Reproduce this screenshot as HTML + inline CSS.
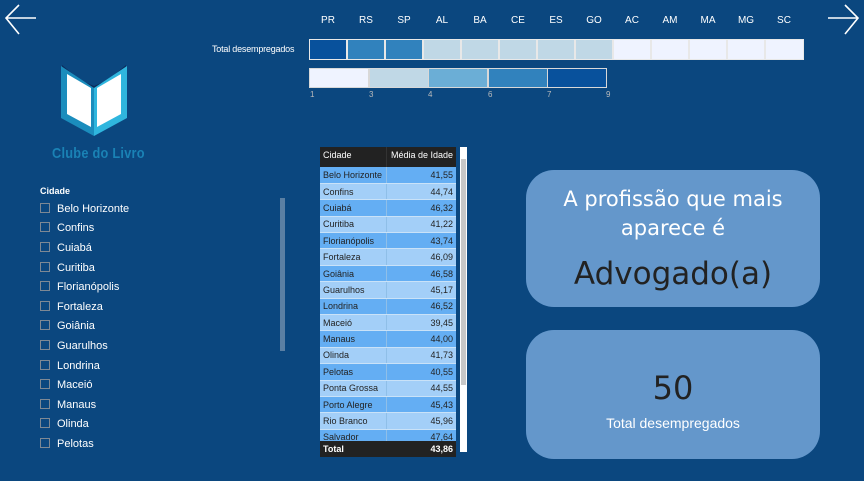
<!DOCTYPE html>
<html><head><meta charset="utf-8"><style>
*{margin:0;padding:0;box-sizing:border-box}
body{width:864px;height:481px;background:#0b477f;font-family:"Liberation Sans",sans-serif;position:relative;overflow:hidden;color:#fff}
.abs{position:absolute}
.lbl{position:absolute;top:15px;font-size:10px;color:#fff;width:38px;text-align:center}
.cell{position:absolute;top:39px;height:21px;width:38px;border:1px solid #e8e8e8}
.lg{position:absolute;top:68px;height:20px;border:1px solid #d8d8d8}
.tick{position:absolute;top:90px;font-size:8px;color:#bbb}
.sl{position:absolute;left:40px;font-size:11px;color:#fff;height:14px;line-height:14px}
.sl i{display:inline-block;width:10px;height:10px;border:1px solid #7d8894;vertical-align:-1px;margin-right:7px}
table{border-collapse:collapse;font-size:9px;color:#222;width:136px}
td{height:16.4px;padding:0 3px;white-space:nowrap;overflow:hidden;border-bottom:1px solid #c9e2f8}
td:first-child{border-right:1px solid #8fbfe8;width:66px;max-width:66px}
td:last-child{text-align:right}
tr:nth-child(odd) td{background:#64aef3}
tr:nth-child(even) td{background:#a3cff8}
.card{position:absolute;left:526px;width:294px;background:#6497cb;border-radius:28px;text-align:center;font-family:"DejaVu Sans","Liberation Sans",sans-serif}
</style></head><body>
<svg class="abs" style="left:2px;top:2px" width="36" height="34"><path d="M34 16H5M17 3L4 16L17 32" stroke="#fff" stroke-width="1.6" fill="none"/></svg>
<svg class="abs" style="left:826px;top:2px" width="36" height="34"><path d="M2 16H31M19 3L32 16L19 32" stroke="#fff" stroke-width="1.6" fill="none"/></svg>

<svg class="abs" style="left:58px;top:58px" width="72" height="80">
<polygon points="4,7 22,22 36,28 50,22 68,7 68,12 36,30 4,12" fill="#0d2a5a"/>
<polygon points="3,8 36,30 36,78 3,60" fill="#1b8dbd"/>
<polygon points="69,8 36,30 36,78 69,60" fill="#2fb6de"/>
<polygon points="9,16 33,30 33,69 9,56" fill="#fff"/>
<polygon points="63,16 39,30 39,69 63,56" fill="#fff"/>
</svg>
<div class="abs" style="left:52px;top:145px;font-size:15px;font-weight:bold;color:#1a82b5;transform:scaleX(0.85);transform-origin:left;letter-spacing:0.3px">Clube do Livro</div>

<div class="abs" style="left:212px;top:44px;font-size:9px;color:#fff;letter-spacing:-0.2px">Total desempregados</div>
<div class="lbl" style="left:309px">PR</div><div class="lbl" style="left:347px">RS</div><div class="lbl" style="left:385px">SP</div><div class="lbl" style="left:423px">AL</div><div class="lbl" style="left:461px">BA</div><div class="lbl" style="left:499px">CE</div><div class="lbl" style="left:537px">ES</div><div class="lbl" style="left:575px">GO</div><div class="lbl" style="left:613px">AC</div><div class="lbl" style="left:651px">AM</div><div class="lbl" style="left:689px">MA</div><div class="lbl" style="left:727px">MG</div><div class="lbl" style="left:765px">SC</div>
<div class="cell" style="left:309px;background:#08519c"></div><div class="cell" style="left:347px;background:#3182bd"></div><div class="cell" style="left:385px;background:#3182bd"></div><div class="cell" style="left:423px;background:#c0d8e6"></div><div class="cell" style="left:461px;background:#c0d8e6"></div><div class="cell" style="left:499px;background:#c0d8e6"></div><div class="cell" style="left:537px;background:#c0d8e6"></div><div class="cell" style="left:575px;background:#c0d8e6"></div><div class="cell" style="left:613px;background:#eff3ff"></div><div class="cell" style="left:651px;background:#eff3ff"></div><div class="cell" style="left:689px;background:#eff3ff"></div><div class="cell" style="left:727px;background:#eff3ff"></div><div class="cell" style="left:765px;width:39px;background:#eff3ff"></div>
<div class="lg" style="left:309px;width:60px;background:#eff3ff"></div><div class="lg" style="left:369px;width:60px;background:#c0d8e6"></div><div class="lg" style="left:428px;width:60px;background:#6baed6"></div><div class="lg" style="left:488px;width:60px;background:#3182bd"></div><div class="lg" style="left:547px;width:60px;background:#08519c"></div>
<div class="tick" style="left:310px">1</div><div class="tick" style="left:369px">3</div><div class="tick" style="left:428px">4</div><div class="tick" style="left:488px">6</div><div class="tick" style="left:547px">7</div><div class="tick" style="left:606px">9</div>

<div class="abs" style="left:40px;top:186px;font-size:9px;font-weight:bold">Cidade</div>
<div class="abs" style="left:280px;top:198px;width:5px;height:153px;background:#5a7fa3"></div>
<div class="sl" style="top:202px"><i></i>Belo Horizonte</div>
<div class="sl" style="top:221px"><i></i>Confins</div>
<div class="sl" style="top:241px"><i></i>Cuiabá</div>
<div class="sl" style="top:261px"><i></i>Curitiba</div>
<div class="sl" style="top:280px"><i></i>Florianópolis</div>
<div class="sl" style="top:300px"><i></i>Fortaleza</div>
<div class="sl" style="top:319px"><i></i>Goiânia</div>
<div class="sl" style="top:339px"><i></i>Guarulhos</div>
<div class="sl" style="top:359px"><i></i>Londrina</div>
<div class="sl" style="top:378px"><i></i>Maceió</div>
<div class="sl" style="top:398px"><i></i>Manaus</div>
<div class="sl" style="top:417px"><i></i>Olinda</div>
<div class="sl" style="top:437px"><i></i>Pelotas</div>

<div class="abs" style="left:320px;top:147px;width:136px;height:20px;background:#222;font-size:9px;color:#fff;line-height:16px"><span style="position:absolute;left:3px">Cidade</span><span style="position:absolute;right:3px">Média de Idade</span><span style="position:absolute;left:66px;top:0;width:1px;height:20px;background:#333"></span></div>
<div class="abs" style="left:460px;top:147px;width:7px;height:305px;background:#fff"><div style="position:absolute;left:1px;top:12px;width:5px;height:226px;background:#c8c8c8"></div></div>
<div class="abs" style="left:320px;top:167px;width:136px;height:274px;overflow:hidden">
<table>
<tr><td>Belo Horizonte</td><td>41,55</td></tr>
<tr><td>Confins</td><td>44,74</td></tr>
<tr><td>Cuiabá</td><td>46,32</td></tr>
<tr><td>Curitiba</td><td>41,22</td></tr>
<tr><td>Florianópolis</td><td>43,74</td></tr>
<tr><td>Fortaleza</td><td>46,09</td></tr>
<tr><td>Goiânia</td><td>46,58</td></tr>
<tr><td>Guarulhos</td><td>45,17</td></tr>
<tr><td>Londrina</td><td>46,52</td></tr>
<tr><td>Maceió</td><td>39,45</td></tr>
<tr><td>Manaus</td><td>44,00</td></tr>
<tr><td>Olinda</td><td>41,73</td></tr>
<tr><td>Pelotas</td><td>40,55</td></tr>
<tr><td>Ponta Grossa</td><td>44,55</td></tr>
<tr><td>Porto Alegre</td><td>45,43</td></tr>
<tr><td>Rio Branco</td><td>45,96</td></tr>
<tr><td>Salvador</td><td>47,64</td></tr>
</table></div>
<div class="abs" style="left:320px;top:441px;width:136px;height:16px;background:#222;font-size:9px;font-weight:bold;line-height:16px"><span style="position:absolute;left:3px">Total</span><span style="position:absolute;right:3px">43,86</span></div>

<div class="card" style="top:170px;height:137px">
<div style="padding-top:15px;font-size:21px;line-height:29px;color:#fff">A profissão que mais<br>aparece é</div>
<div style="margin-top:13px;font-size:31px;color:#222">Advogado(a)</div>
</div>
<div class="card" style="top:330px;height:129px">
<div style="padding-top:39px;font-size:32px;color:#222">50</div>
<div style="margin-top:8px;font-size:14px;color:#fff;font-family:'Liberation Sans',sans-serif">Total desempregados</div>
</div>
</body></html>
